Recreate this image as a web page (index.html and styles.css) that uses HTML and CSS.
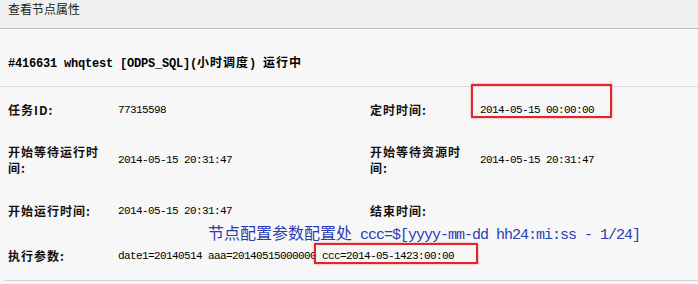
FILE: index.html
```html
<!DOCTYPE html>
<html lang="zh-CN">
<head>
    <meta charset="UTF-8">
    <title>查看节点属性</title>
    <link rel="stylesheet" href="styles.css">
</head>
<body>
    <div class="panel">
        <!-- Panel header -->
        <div class="panel-head">查看节点属性</div>

        <div class="node-title"><span class="mono">#416631 whqtest [ODPS_SQL](</span><span class="cn">小时调度</span><span class="mono">) </span><span class="cn">运行中</span></div>
        <div class="rule"></div>

        <!-- Task info -->
        <div class="info">
            <div class="row">
                <div class="label">任务ID:</div>
                <div class="value">77315598</div>
                <div class="label">定时时间:</div>
                <div class="value marked">2014-05-15 00:00:00<span class="box box-time"></span></div>
            </div>
            <div class="row">
                <div class="label">开始等待运行时间:</div>
                <div class="value">2014-05-15 20:31:47</div>
                <div class="label">开始等待资源时间:</div>
                <div class="value">2014-05-15 20:31:47</div>
            </div>
            <div class="row">
                <div class="label">开始运行时间:</div>
                <div class="value">2014-05-15 20:31:47</div>
                <div class="label">结束时间:</div>
                <div class="value"></div>
            </div>
            <div class="row">
                <div class="label">执行参数:</div>
                <div class="value wide">date1=20140514 aaa=20140515000000 <span class="marked">ccc=2014-05-1423:00:00<span class="box box-param"></span></span></div>
            </div>

            <!-- annotation drawn over the table -->
            <div class="note">节点配置参数配置处<span class="latin"> ccc=$[yyyy-mm-dd hh24:mi:ss - 1/24]</span></div>
        </div>
        <div class="foot-rule"></div>
    </div>
</body>
</html>
```

FILE: styles.css
```css
body {
    margin: 0;
    background-color: #f7f7f7;
    font-family: "Noto Sans CJK SC", sans-serif;
    font-size: 12px;
    color: #000;
    overflow: hidden;
}

.panel-head {
    height: 29px;
    box-sizing: border-box;
    padding: 2px 8px 0;
    line-height: 14px;
    background-color: #f0f0f0;
    border-bottom: 1px solid #bdbdbd;
    color: #1a1a1a;
}

.node-title {
    margin: 26px 0 0 8px;
    line-height: 13px;
    font-weight: bold;
    white-space: nowrap;
}

.node-title .mono {
    font-family: "Liberation Mono", monospace;
    letter-spacing: -0.2px;
}

.node-title .cn {
    letter-spacing: 1px;
}

.rule {
    margin-top: 15px;
    border-top: 1px solid #dcdcdc;
}

.info {
    position: relative;
    padding-left: 8px;
}

.row {
    display: grid;
    grid-template-columns: 110px 252px 110px 1fr;
    align-items: center;
    min-height: 45px;
    box-sizing: border-box;
    padding: 12px 0;
}

.label {
    max-width: 100px;
    font-weight: bold;
    letter-spacing: 1px;
    line-height: 16px;
    color: #111;
}

.value {
    font-family: "Liberation Mono", monospace;
    font-size: 11px;
    letter-spacing: -0.6px;
    line-height: 16px;
    white-space: nowrap;
}

.value.wide {
    grid-column: 2 / 5;
}

.marked {
    position: relative;
}

/* red highlight boxes */
.box {
    position: absolute;
    box-sizing: border-box;
    border: 2px solid #e3242b;
    box-shadow: 0 0 2px rgba(227, 36, 43, 0.5);
    pointer-events: none;
}

.box-time {
    left: -9px;
    top: -18px;
    width: 141px;
    height: 34px;
}

.box-param {
    left: -8px;
    top: -7px;
    width: 164px;
    height: 21px;
}

.note {
    position: absolute;
    left: 208px;
    top: 135px;
    font-size: 16px;
    line-height: 20px;
    color: #2a3cb4;
    white-space: nowrap;
}

.note .latin {
    font-family: "Liberation Mono", monospace;
    font-size: 15px;
    letter-spacing: -1px;
}

.foot-rule {
    margin: 2px 0 0 4px;
    border-top: 1px solid #d4d4d4;
}
```
